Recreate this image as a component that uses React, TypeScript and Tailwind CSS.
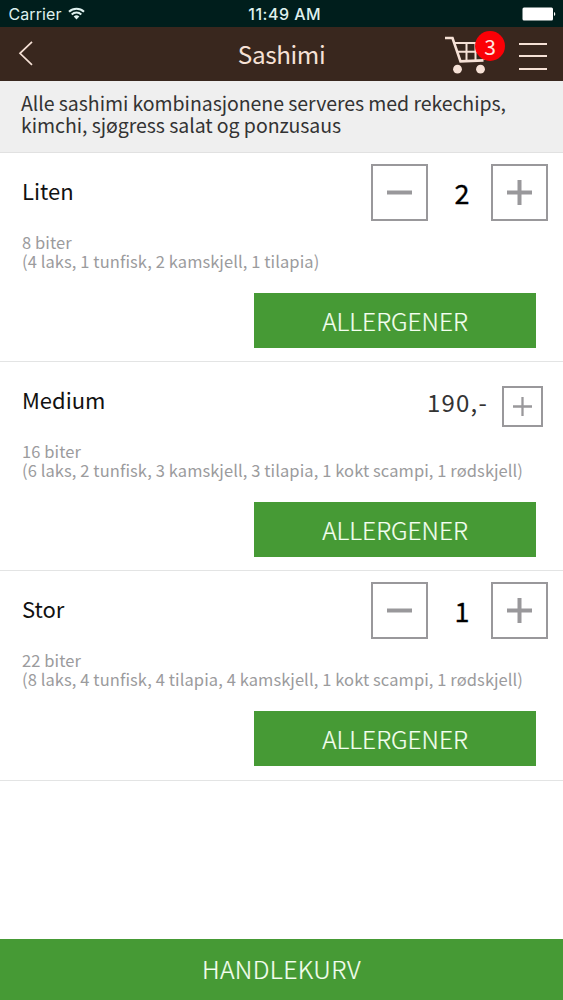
type Item = {
  name: string;
  count: string;
  detail: string;
  quantity?: number;
  price?: string;
};

const items: Item[] = [
  { name: 'Liten', count: '8 biter', detail: '(4 laks, 1 tunfisk, 2 kamskjell, 1 tilapia)', quantity: 2 },
  { name: 'Medium', count: '16 biter', detail: '(6 laks, 2 tunfisk, 3 kamskjell, 3 tilapia, 1 kokt scampi, 1 rødskjell)', price: '190,-' },
  { name: 'Stor', count: '22 biter', detail: '(8 laks, 4 tunfisk, 4 tilapia, 4 kamskjell, 1 kokt scampi, 1 rødskjell)', quantity: 1 },
];

function StatusBar() {
  return (
    <div className="grid h-[27px] grid-cols-3 items-center bg-[#001e1c] pl-[8.5px] pr-[7px] font-['Inter',sans-serif] text-[#dff0ee]">
      <div className="flex items-center gap-[6px]">
        <span className="text-[16px] leading-6 tracking-[0.1px]">Carrier</span>
        <svg width="17" height="13" viewBox="0 0 17 13" fill="none" stroke="currentColor" strokeWidth="2">
          <path d="M1 4.7a10.8 10.8 0 0 1 15 0" />
          <path d="M3.7 7.5a6.9 6.9 0 0 1 9.6 0" />
          <path d="M8.5 12.4 5.7 9.5a4 4 0 0 1 5.6 0z" fill="currentColor" stroke="none" />
        </svg>
      </div>
      <div className="whitespace-nowrap pl-[5px] text-center text-[16px] font-medium leading-6 tracking-[0.5px]">11:49 AM</div>
      <div className="flex justify-end">
        <svg width="34" height="14" viewBox="0 0 34 14" fill="#fff">
          <rect x="0.5" y="0.5" width="30.5" height="13" rx="1.5" />
          <path d="M32 5a2.2 2.2 0 0 1 0 4z" />
        </svg>
      </div>
    </div>
  );
}

function NavBar() {
  return (
    <header className="flex h-[54px] items-center bg-[#39271e] text-[#f6e1d6]">
      <button className="flex w-[130px] pl-[18px]" aria-label="Tilbake">
        <svg width="16" height="28" viewBox="0 0 16 28" fill="none" stroke="currentColor" strokeWidth="1.7">
          <path d="M14 1.8 2 13.3l12 11.5" />
        </svg>
      </button>
      <h1 className="flex-1 text-center text-[24.3px] leading-[54px] tracking-[-0.4px]">Sashimi</h1>
      <div className="flex w-[130px] items-center justify-end gap-[15px] pr-4">
        <div className="relative pb-1">
          <svg className="block" width="60" height="44" viewBox="0 0 60 44" fill="none" stroke="currentColor">
            <path d="M1 8h7.5l8 23.4 23-1" strokeWidth="2.6" />
            <path d="M10.5 13h30v17M13.5 21.7h28M22.5 13v17.5M31.5 13v17.5" strokeWidth="2" />
            <circle cx="13.5" cy="39.2" r="4.4" fill="currentColor" stroke="none" />
            <circle cx="36.5" cy="39.2" r="4.4" fill="currentColor" stroke="none" />
          </svg>
          <span className="absolute left-[31px] top-[1px] h-[30px] w-[30px] rounded-full bg-[#fb0006] text-center text-[21px] leading-[30px] text-[#ffe6e0]">3</span>
        </div>
        <button className="flex w-[28px] flex-col gap-[10.5px] pt-[4px]" aria-label="Meny">
          <span className="h-[2px] w-full bg-current" />
          <span className="h-[2px] w-full bg-current" />
          <span className="h-[2px] w-full bg-current" />
        </button>
      </div>
    </header>
  );
}

function Plus({ size, stroke }: { size: number; stroke: number }) {
  return (
    <svg width={size} height={size} viewBox="0 0 25 25" stroke="#99989b" strokeWidth={stroke}>
      <path d="M0 12.5h25M12.5 0v25" />
    </svg>
  );
}

function Stepper({ quantity }: { quantity: number }) {
  return (
    <div className="flex items-center pt-[11px]">
      <button className="flex h-[57px] w-[57px] items-center justify-center border-2 border-[#99989b]" aria-label="Færre">
        <svg width="25" height="25" viewBox="0 0 25 25" stroke="#99989b" strokeWidth="4">
          <path d="M0 12.5h25" />
        </svg>
      </button>
      <span className="w-[63px] pl-[5px] text-center text-[27px] leading-[57px] text-black [-webkit-text-stroke:0.3px_black]">
        {quantity}
      </span>
      <button className="flex h-[57px] w-[57px] items-center justify-center border-2 border-[#99989b]" aria-label="Flere">
        <Plus size={25} stroke={4} />
      </button>
    </div>
  );
}

function ItemRow({ item }: { item: Item }) {
  return (
    <section className="flex h-[209.2px] flex-col border-b-[1.5px] border-[#e3e4e4]">
      <div className="flex h-[80px] items-start justify-between pl-[22px] pr-[15px]">
        <h2 className="pt-[20px] text-[22px] leading-[34px] text-[#111]">{item.name}</h2>
        {item.quantity !== undefined ? (
          <Stepper quantity={item.quantity} />
        ) : (
          <div className="flex items-start pr-[5px] pt-[24px]">
            <span className="pr-[14px] text-[24px] leading-[32px] tracking-[1.2px] text-[#333]">{item.price}</span>
            <button className="flex h-[41px] w-[41px] items-center justify-center border-2 border-[#99989b]" aria-label="Legg til">
              <Plus size={19} stroke={3} />
            </button>
          </div>
        )}
      </div>
      <div className="whitespace-nowrap pl-[22px] text-[16.5px] leading-[19px] tracking-[0.09px] text-[#9b9b9d]">
        <p>{item.count}</p>
        <p>{item.detail}</p>
      </div>
      <div className="mt-[22px] flex justify-end pr-[27px]">
        <button className="h-[55px] w-[282px] bg-[#469a35] text-center text-[24.5px] font-light leading-[56px] text-[#f4fff0] [-webkit-text-stroke:0.2px_#f4fff0]">ALLERGENER</button>
      </div>
    </section>
  );
}

export default function App() {
  return (
    <div className="flex h-[1000px] w-[563px] flex-col overflow-hidden bg-white font-['Noto_Sans_CJK_SC','Noto_Sans',sans-serif]">
      <StatusBar />
      <NavBar />
      <div className="h-[72px] whitespace-nowrap border-b border-[#e1e1e1] bg-[#efefef] pl-[21px] pt-[11px] text-[19.5px] leading-[22px] tracking-[-0.06px] text-[#333]">
        <p>Alle sashimi kombinasjonene serveres med rekechips,</p>
        <p>kimchi, sjøgress salat og ponzusaus</p>
      </div>
      <main className="flex-1">
        {items.map((item) => (
          <ItemRow key={item.name} item={item} />
        ))}
      </main>
      <button className="h-[61.5px] bg-[#469a35] pb-[2px] text-center text-[24.8px] font-light leading-[59px] tracking-[0.4px] text-[#f4fff0] [-webkit-text-stroke:0.2px_#f4fff0]">HANDLEKURV</button>
    </div>
  );
}
